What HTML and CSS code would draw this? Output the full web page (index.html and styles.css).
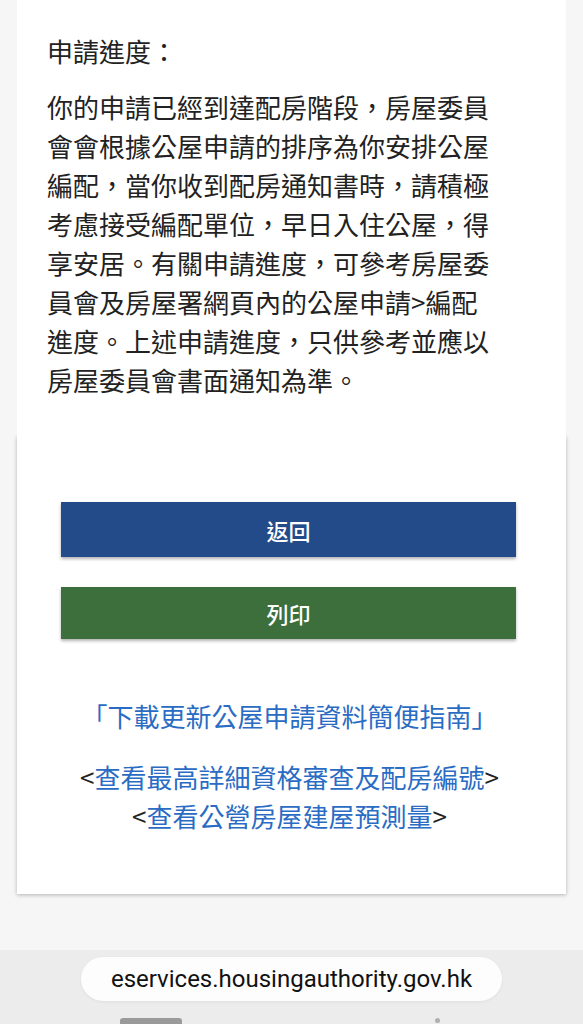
FILE: index.html
```html
<!DOCTYPE html>
<html lang="zh-Hant">
<head>
<meta charset="utf-8">
<title>申請進度</title>
<link rel="stylesheet" href="styles.css">
</head>
<body>
<main class="page">
  <section class="status">
    <h2 class="status-title">申請進度：</h2>
    <p class="status-text">你的申請已經到達配房階段，房屋委員會會根據公屋申請的排序為你安排公屋編配，當你收到配房通知書時，請積極考慮接受編配單位，早日入住公屋，得享安居。有關申請進度，可參考房屋委員會及房屋署網頁內的公屋申請&gt;編配進度。上述申請進度，只供參考並應以房屋委員會書面通知為準。</p>
  </section>
  <section class="actions">
    <button class="btn btn-back">返回</button>
    <button class="btn btn-print">列印</button>
    <div class="links">
      <p class="link-line first"><a href="#">「下載更新公屋申請資料簡便指南」</a></p>
      <p class="link-line">&lt;<a href="#">查看最高詳細資格審查及配房編號</a>&gt;</p>
      <p class="link-line">&lt;<a href="#">查看公營房屋建屋預測量</a>&gt;</p>
    </div>
  </section>
</main>
<footer class="safari">
  <div class="url-pill">eservices.housingauthority.gov.hk</div>
  <div class="toolbar">
    <span class="tool-a"></span>
    <span class="tool-b"></span>
  </div>
</footer>
</body>
</html>
```
FILE: styles.css
```css
html, body {
  margin: 0;
  padding: 0;
}
body {
  background: #f6f6f6;
  font-family: "Noto Sans CJK TC", "Noto Sans", sans-serif;
  color: #222;
  width: 583px;
  height: 1024px;
  overflow: hidden;
  display: flex;
  flex-direction: column;
}
.page {
  padding: 0 17px;
}
.status {
  position: relative;
  z-index: 1;
  background: #fff;
  padding: 31px 0 37px 30px;
}
.status-title {
  margin: 0 0 17px;
  font-size: 26px;
  font-weight: 400;
  line-height: 39px;
}
.status-text {
  margin: 0;
  width: 448px;
  font-size: 26px;
  line-height: 39px;
}
.actions {
  background: #fff;
  box-shadow: 0 1px 4px rgba(0, 0, 0, 0.28);
  padding: 66px 0 59px;
  display: flex;
  flex-direction: column;
  align-items: center;
}
.btn {
  display: block;
  width: 455px;
  margin-left: -6px;
  border: 0;
  color: #fff;
  font-family: "Noto Sans CJK TC", "Noto Sans", sans-serif;
  font-size: 22px;
  font-weight: 500;
  box-shadow: 0 2px 3px rgba(0, 0, 0, 0.3);
  padding: 0;
}
.btn-back {
  background: #234b89;
  height: 55px;
}
.btn-print {
  background: #3d6f3d;
  height: 52px;
  margin-top: 30px;
}
.links {
  margin-top: 57px;
  text-align: center;
  margin-left: -4px;
}
.link-line {
  margin: 0;
  font-size: 26px;
  line-height: 39px;
  color: #222;
}
.link-line.first {
  margin-bottom: 22px;
}
.link-line a {
  color: #2a6cc3;
  text-decoration: none;
}
.safari {
  margin-top: auto;
  height: 74px;
  background: #ececec;
  display: flex;
  flex-direction: column;
  align-items: center;
  overflow: hidden;
}
.url-pill {
  margin-top: 7px;
  width: 421px;
  height: 46px;
  border-radius: 23px;
  background: #fdfdfd;
  display: flex;
  align-items: center;
  justify-content: center;
  font-family: Roboto, "Liberation Sans", sans-serif;
  font-size: 24px;
  color: #111;
  box-shadow: 0 1px 3px rgba(0, 0, 0, 0.06);
}
.toolbar {
  margin-top: 17px;
  width: 583px;
  display: flex;
  align-items: flex-start;
}
.tool-a {
  margin-left: 120px;
  width: 62px;
  height: 6px;
  border-radius: 3px 3px 0 0;
  background: #9a9a9a;
}
.tool-b {
  margin-left: 253px;
  width: 5px;
  height: 5px;
  border-radius: 50%;
  background: #b0b0b0;
}
```
